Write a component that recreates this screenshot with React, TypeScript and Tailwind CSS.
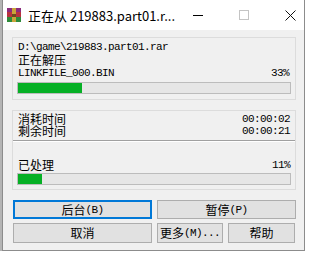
import React from "react";

const cjk = "font-['Noto_Sans_CJK_SC',sans-serif]";

const A: React.FC<{ children: React.ReactNode }> = ({ children }) => (
  <span className="inline-block font-['Liberation_Mono',monospace] text-[11px] leading-[12px] tracking-[-0.6px]">
    {children}
  </span>
);

const C: React.FC<{ children: React.ReactNode }> = ({ children }) => (
  <span className="inline-block text-[12px] leading-[12px]">{children}</span>
);

const Bar: React.FC<{ fill: number }> = ({ fill }) => (
  <div className="mx-[4px] h-[12px] border border-[#bcbcbc] bg-[#e6e6e6]">
    <div className="h-full bg-[#06b025]" style={{ width: fill }} />
  </div>
);

const Btn: React.FC<{ children: React.ReactNode; className?: string; focus?: boolean }> = ({
  children,
  className,
  focus,
}) => (
  <div
    className={`flex items-center justify-center whitespace-nowrap bg-[#e1e1e1] text-black ${cjk} ${
      focus ? "border-2 border-[#0078d7]" : "border border-[#adadad]"
    } ${className ?? ""}`}
  >
    {children}
  </div>
);

export default function App() {
  return (
    <div className="flex h-[253px] w-[309px] overflow-hidden bg-white">
      <div className="h-[251px] w-[2px] bg-[#b4b4b4]" />
      <div className="flex h-[251px] w-[303px] flex-col border-x border-b border-[#8c8c8c]">
        {/* Title bar */}
        <div className="flex h-[30px] items-center bg-white">
          <svg width="16" height="16" viewBox="0 0 16 16" className="ml-[3px] mr-[6px] shrink-0">
            <rect x="1" y="1" width="14" height="4" fill="#8a2c7c" />
            <rect x="1" y="5" width="14" height="5" fill="#b8323f" />
            <rect x="1" y="10" width="14" height="5" fill="#2e8b3a" />
            <rect x="6" y="1" width="4" height="14" fill="#c9a43a" />
            <rect x="6" y="7" width="4" height="3" fill="#6b4b1e" />
          </svg>
          <span className={`${cjk} whitespace-nowrap text-[13px] leading-none text-black`}>
            正在从 219883.part01.r...
          </span>
          <div className="ml-auto flex h-full shrink-0">
            <div className="flex w-[46px] items-center justify-center">
              <div className="h-px w-[10px] bg-black" />
            </div>
            <div className="flex w-[46px] items-center justify-center">
              <div className="h-[10px] w-[10px] border border-[#c4c4c4]" />
            </div>
            <div className="flex w-[46px] items-center justify-center">
              <svg width="11" height="11" viewBox="0 0 11 11">
                <path d="M0.5 0.5 L10.5 10.5 M10.5 0.5 L0.5 10.5" stroke="#111" strokeWidth="1" />
              </svg>
            </div>
          </div>
        </div>

        {/* Body */}
        <div className={`flex flex-1 flex-col bg-[#f0f0f0] pl-[9px] pr-[8px] pt-[7px] text-black ${cjk}`}>
          <div className="h-[63px] border border-[#dcdcdc] pt-[3px]">
            <div className="flex flex-col gap-[1px] px-[5px]">
              <div className="flex h-[12px] items-center"><A>D:\game\219883.part01.rar</A></div>
              <div className="flex h-[12px] items-center"><C>正在解压</C></div>
              <div className="flex h-[12px] items-center justify-between pr-[1px]">
                <A>LINKFILE_000.BIN</A>
                <A>33%</A>
              </div>
            </div>
            <div className="mt-[3px]">
              <Bar fill={64} />
            </div>
          </div>

          <div className="mt-[10px] h-[80px] border border-[#dcdcdc]">
            <div className="flex flex-col px-[5px] pt-[2px]">
              <div className="flex h-[12px] items-center justify-between">
                <C>消耗时间</C>
                <A>00:00:02</A>
              </div>
              <div className="flex h-[12px] items-center justify-between">
                <C>剩余时间</C>
                <A>00:00:21</A>
              </div>
            </div>
            <div className="mt-[3px] h-px bg-[#a0a0a0]" />
            <div className="h-px bg-white" />
            <div className="mt-[16px] flex h-[13px] items-center justify-between px-[5px]">
              <C>已处理</C>
              <A>11%</A>
            </div>
            <div className="mt-[2px]">
              <Bar fill={24} />
            </div>
          </div>

          <div className="ml-[1px] mt-[10px] flex flex-col gap-[4px]">
            <div className="flex gap-[5px]">
              <Btn focus className="h-[19px] w-[139px]">
                <C>后台</C>
                <A>(B)</A>
              </Btn>
              <Btn className="h-[19px] w-[139px]">
                <C>暂停</C>
                <A>(P)</A>
              </Btn>
            </div>
            <div className="flex gap-[5px]">
              <Btn className="h-[20px] w-[139px]">
                <C>取消</C>
              </Btn>
              <Btn className="h-[20px] w-[66px]">
                <C>更多</C>
                <A>(M)...</A>
              </Btn>
              <Btn className="h-[20px] w-[67px]">
                <C>帮助</C>
              </Btn>
            </div>
          </div>
        </div>
      </div>
    </div>
  );
}
